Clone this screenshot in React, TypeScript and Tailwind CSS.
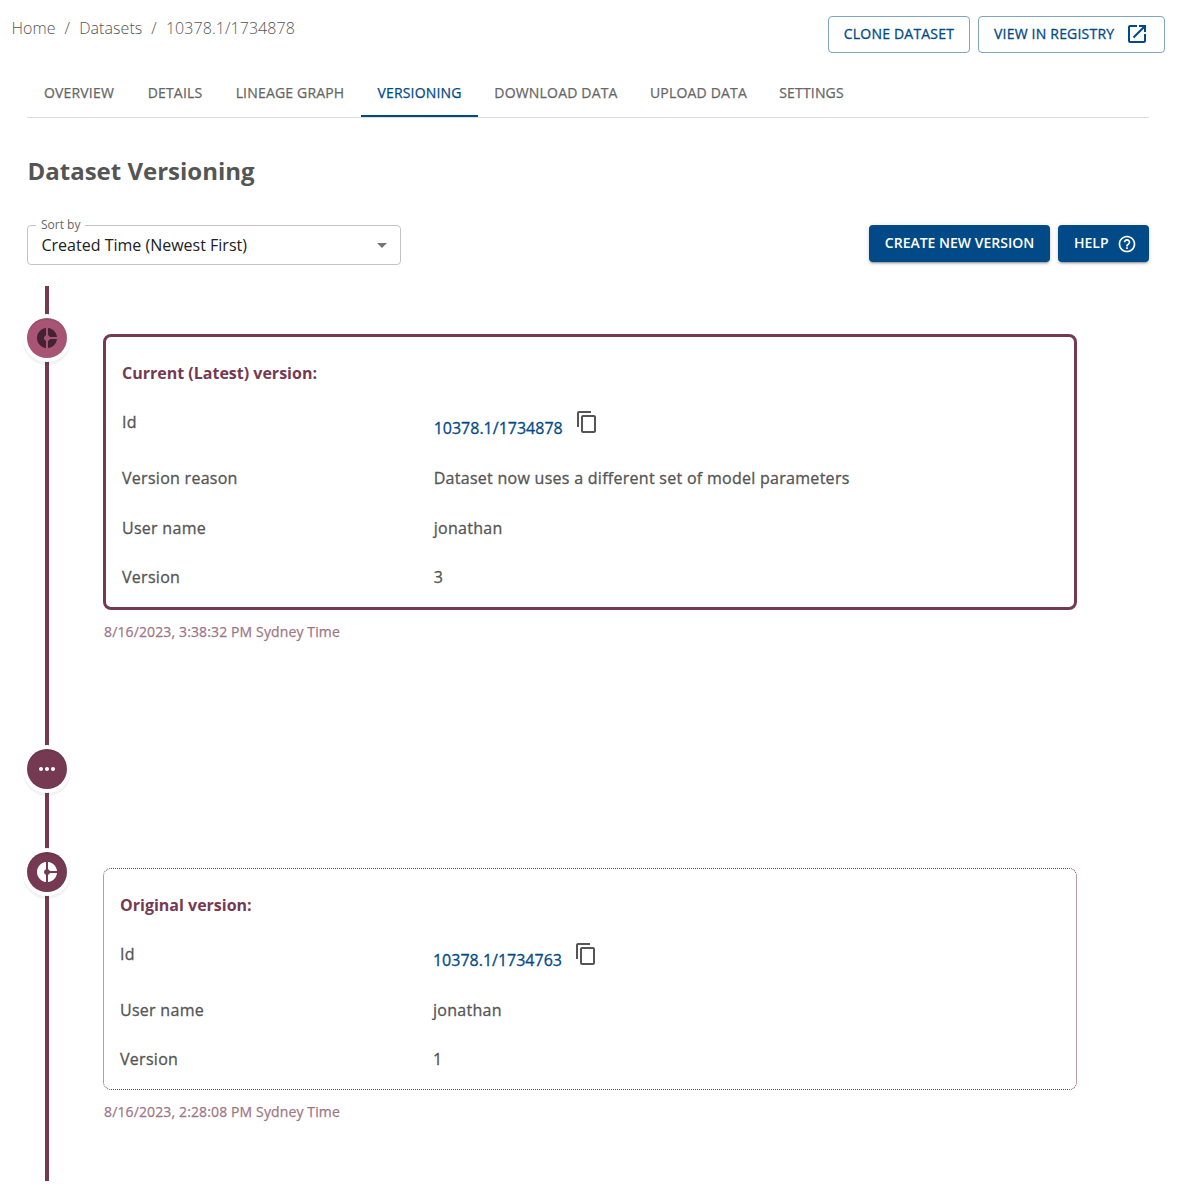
import type { ReactNode } from "react";
import { MdContentCopy, MdDonutSmall, MdHelpOutline, MdLaunch, MdMoreHoriz } from "react-icons/md";

const tabs = [
  { label: "OVERVIEW", width: "w-[104px]" },
  { label: "DETAILS", width: "w-[88px]" },
  { label: "LINEAGE GRAPH", width: "w-[142px]" },
  { label: "VERSIONING", width: "w-[117px]" },
  { label: "DOWNLOAD DATA", width: "w-[156px]" },
  { label: "UPLOAD DATA", width: "w-[129px]" },
  { label: "SETTINGS", width: "w-[97px]" },
];

function Header() {
  return (
    <header className="flex h-[69px] items-start justify-between pl-[11.5px] pr-[18px] pt-4">
      <nav className="flex gap-[9px] text-base font-light leading-6 tracking-[0.07px] text-[#555555]">
        <span>Home</span>
        <span>/</span>
        <span>Datasets</span>
        <span>/</span>
        <span>10378.1/1734878</span>
      </nav>
      <div className="flex gap-2 text-sm font-medium tracking-[0.2px] text-[#014a87] [-webkit-text-stroke:0.3px]">
        <button className="flex h-[37px] w-[142px] items-center justify-center rounded border border-[#80a4c3] pb-0.5">
          CLONE DATASET
        </button>
        <button className="flex h-[37px] w-[187px] items-center justify-between rounded border border-[#80a4c3] pb-px pl-[15px] pr-[15px]">
          <span className="pb-px">VIEW IN REGISTRY</span>
          <MdLaunch className="size-6" strokeWidth={0} />
        </button>
      </div>
    </header>
  );
}

function TabBar() {
  return (
    <div className="ml-[27px] mr-[34px] flex h-[49px] border-b border-[#dedede] text-sm font-medium leading-[17.5px] tracking-[0.18px] text-[#666666] [-webkit-text-stroke:0.25px]">
      {tabs.map(({ label, width }) => (
        <button
          key={label}
          className={
            width +
            (label === "VERSIONING"
              ? " h-12 shrink-0 whitespace-nowrap border-b-2 border-[#014a87] pt-0.5 text-[#014a87]"
              : " h-12 shrink-0 whitespace-nowrap border-b-2 border-transparent pt-0.5")
          }
        >
          {label}
        </button>
      ))}
    </div>
  );
}

function Controls() {
  return (
    <div className="flex items-start justify-between">
      <div className="relative flex h-10 w-[374px] items-center justify-between rounded border border-[#c4c4c4] pl-[13.5px] pr-[6px] text-[#212121]">
        <span>Created Time (Newest First)</span>
        <svg viewBox="0 0 24 24" className="size-6 fill-[#757575]">
          <path d="M7 10l5 5 5-5z" />
        </svg>
        <span className="absolute -top-[9px] left-2 bg-white px-[5px] text-xs leading-4 text-[#666666]">Sort by</span>
      </div>
      <div className="flex gap-2 text-sm font-semibold text-white">
        <button className="flex h-[37px] w-[181px] items-center justify-center rounded bg-[#014a87] pb-0.5 shadow-[0_3px_1px_-2px_rgba(0,0,0,0.2),0_2px_2px_0_rgba(0,0,0,0.14),0_1px_5px_0_rgba(0,0,0,0.12)]">
          CREATE NEW VERSION
        </button>
        <button className="flex h-[37px] w-[91px] items-center justify-between rounded bg-[#014a87] pl-4 pr-3 shadow-[0_3px_1px_-2px_rgba(0,0,0,0.2),0_2px_2px_0_rgba(0,0,0,0.14),0_1px_5px_0_rgba(0,0,0,0.12)]">
          <span className="pb-0.5">HELP</span>
          <MdHelpOutline className="mt-px size-5" />
        </button>
      </div>
    </div>
  );
}

function Marker({ latest = false, children }: { latest?: boolean; children: ReactNode }) {
  return (
    <div
      className={
        "flex size-10 shrink-0 items-center justify-center rounded-full shadow-[0_0_0_4px_#fff,inset_0_2px_0_rgba(0,0,0,0.08),0_3px_0_4px_rgba(0,0,0,0.05)] " +
        (latest ? "bg-[#a85575] text-[#442233]" : "bg-[#753a52] text-white")
      }
    >
      {children}
    </div>
  );
}

function IdRow({ id }: { id: string }) {
  return (
    <div className="flex h-14">
      <span className="w-[32%] tracking-[0.28px] [-webkit-text-stroke:0.3px]">Id</span>
      <span className="pt-1.5 text-[#014a87] [-webkit-text-stroke:0.3px]">{id}</span>
      <MdContentCopy className="ml-3 size-6" />
    </div>
  );
}

function Row({ label, value }: { label: string; value: string }) {
  return (
    <div className="flex h-[49.5px] tracking-[0.28px] [-webkit-text-stroke:0.3px]">
      <span className="w-[32%]">{label}</span>
      <span>{value}</span>
    </div>
  );
}

function Timestamp({ children }: { children: string }) {
  return (
    <p className="mt-3 pl-px text-sm font-medium tracking-[0.13px] text-[#753a52] opacity-70 [-webkit-text-stroke:0.25px]">
      {children}
    </p>
  );
}

function Timeline() {
  return (
    <section className="relative mt-[21px] h-[895px] font-medium leading-6 text-[#555555]">
      <div className="absolute left-[18px] top-0 h-full w-1 bg-[#753a52]" />
      <div className="relative flex h-[463px] items-start pt-8">
        <Marker latest>
          <MdDonutSmall className="size-6" />
        </Marker>
        <div className="ml-9 mt-4 w-[974px]">
          <article className="h-[276px] rounded-lg border-[3px] border-[#753a52] pl-4 pr-[-20px] pt-6">
            <div className="w-[974px]">
              <h2 className="h-[49px] font-bold text-[#753a52]">Current (Latest) version:</h2>
              <IdRow id="10378.1/1734878" />
              <Row label="Version reason" value="Dataset now uses a different set of model parameters" />
              <Row label="User name" value="jonathan" />
              <Row label="Version" value="3" />
            </div>
          </article>
          <Timestamp>8/16/2023, 3:38:32 PM Sydney Time</Timestamp>
        </div>
      </div>
      <div className="relative h-[103px]">
        <Marker>
          <MdMoreHoriz className="size-6" />
        </Marker>
      </div>
      <div className="relative flex items-start">
        <Marker>
          <MdDonutSmall className="size-6" />
        </Marker>
        <div className="ml-9 mt-4 w-[974px]">
          <article className="h-[222px] rounded-lg border border-dotted border-[#753a52] pl-4 pt-6">
            <div className="w-[978px]">
              <h2 className="h-[48.75px] font-bold text-[#753a52]">Original version:</h2>
              <IdRow id="10378.1/1734763" />
              <Row label="User name" value="jonathan" />
              <Row label="Version" value="1" />
            </div>
          </article>
          <Timestamp>8/16/2023, 2:28:08 PM Sydney Time</Timestamp>
        </div>
      </div>
    </section>
  );
}

export default function App() {
  return (
    <div className="h-[1196px] w-[1183px] overflow-hidden bg-white font-['Open_Sans',sans-serif]">
      <Header />
      <TabBar />
      <main className="ml-[27px] mr-[34px] pt-[35px]">
        <h1 className="mb-9 pl-[0.5px] text-2xl font-bold leading-9 text-[#555555]">Dataset Versioning</h1>
        <Controls />
        <Timeline />
      </main>
    </div>
  );
}
